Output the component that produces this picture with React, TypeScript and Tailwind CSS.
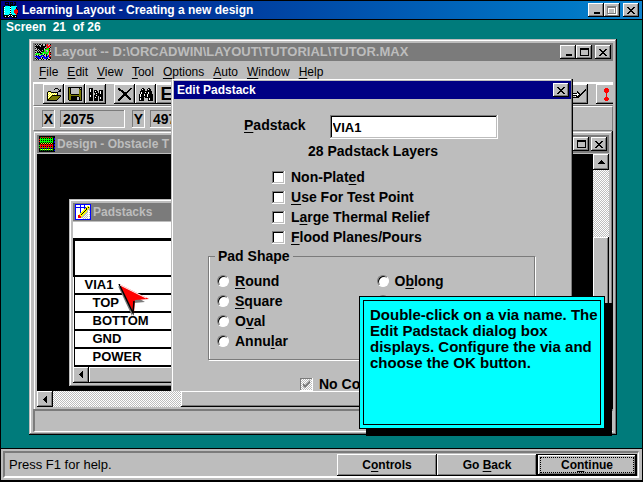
import React from "react";

const COLORS: Record<string, string> = {
  k: "#000000",
  w: "#ffffff",
  g: "#7b7b7b",
  s: "#bdbdbd",
  y: "#ffff00",
  o: "#7b7b00",
  r: "#ff0000",
  b: "#0000ff",
  n: "#000084",
  c: "#00ffff",
  G: "#00ff00",
  d: "#008400",
};

function PixelArt({ rows, className = "" }: { rows: string[]; className?: string }) {
  const width = Math.max(...rows.map((row) => row.length));
  return (
    <svg
      aria-hidden="true"
      width={width}
      height={rows.length}
      viewBox={`0 0 ${width} ${rows.length}`}
      shapeRendering="crispEdges"
      className={`shrink-0 ${className}`}
    >
      {rows.flatMap((row, y) =>
        [...row].map((ch, x) =>
          COLORS[ch] ? <rect key={`${x}-${y}`} x={x} y={y} width="1" height="1" fill={COLORS[ch]} /> : null,
        ),
      )}
    </svg>
  );
}

const ART = {
  app: [
    "..kkkk.kkk.kk...",
    "..k..k.k.k..k...",
    "..kkkk.kkk.kk...",
    ".....kkkkkkk....",
    "kkccccckcccccc..",
    "kwcccccwccccck..",
    "kcccccckccccck..",
    "kwcccccwccccrrk.",
    "kcccccckcccrrrr.",
    "kwcccccwcccrrrr.",
    "kcccccckcccrrrr.",
    "kwcccccwccccrrk.",
    "kccccckkkccccr..",
    "kkkkkkwkwkkkkk..",
    "kkwkkwkkkwkkwk..",
    ".kkkkk...kkkkk..",
  ],
  layout: [
    "kskskkskssk.r.sk",
    "sksksskksskrrsrr",
    "kkkkkskkkkk.rrr.",
    "skkkkkkkkks.rrsk",
    "kskkkkkkkskrGGks",
    "sskskkkkksGGGGr.",
    "kkskskkskG.ssGks",
    "sskskskkkG..sGrs",
    "kskkkksGGGG.GGrk",
    "sGGGskkGsGGGGsrr",
    "GGsGGGGGskskGsrk",
    "skskssbbkssksbrs",
    "bbbbkbbsbbskbbrr",
    "skbbbbskbbbbbskk",
    "kskbbksksbbbkssk",
    "skskssksksskskks",
  ],
  design: [
    "kkkkkkkkkkkkkkkk",
    "kdrdrdrdrdrdrdkk",
    "kGkGkGkGkGkGkGkb",
    "rGGGGGGGGGGGGGkb",
    "kGkGkGkGkGkGkGkk",
    "rGGGGGGGGGGGGGkb",
    "kGkGkGkGkGkGkGkb",
    "kkykykykykykykkk",
    "krkrkrkrkrkrkrkb",
    "Grrrrrrrrrrrrrkb",
    "krkrkrkrkrkrkrkk",
    "GrrGrrGrrGrrGrkb",
    "kdkbkdkbkdkbkdkb",
    "kGyGyGyGyGyGyGkk",
    "kdkdkdkdkdkdkdkb",
    "kkkkkkkkkkkkkkkk",
  ],
  pencil: [
    "bbbbbbbbbbbbbbbb",
    "bwwwwbwwwbwwwwwb",
    "bwwwwbwwwbwwyywb",
    "bbbbbbbbbbbyykyb",
    "bwwwwbwwwbykyysb",
    "bwwwwbwwwyykyssb",
    "bwwwwbwwyykyswsb",
    "bwwwwbwyykyyswwb",
    "bwwwwbyykyysswsb",
    "bwwwwyykyysswwwb",
    "bwwwyykyysswswsb",
    "bwwrryyysswswwwb",
    "bwwrrrysswswswsb",
    "bwwrrrsswswswwwb",
    "bwwwwwwwswswswsb",
    "bbbbbbbbbbbbbbbb",
  ],
  open: [
    ".........kkk....",
    "........k...k.k.",
    ".............kk.",
    "..kkk.......kkk.",
    ".kywykkkkkkk....",
    ".kwywywywywk....",
    ".kywywywywyk....",
    ".kwywykkkkkkkkk.",
    ".kywykooooooook.",
    ".kwykooooooook..",
    ".kykooooooook...",
    ".kkooooooook....",
    ".kkkkkkkkkk.....",
  ],
  save: [
    "kkkkkkkkkkkkkk",
    "kokssssssssksk",
    "kokssssssssokk",
    "kokssssssssook",
    "kokssssssssook",
    "kokssssssssook",
    "kokssssssssook",
    "kookkkkkkkkook",
    "kooooooooooook",
    "kookkkkkkkkook",
    "kookkkkkksskok",
    "kookkkkkksskok",
    "kookkkkkksskok",
    ".kkkkkkkkkkkkk",
  ],
  books: [
    "kkkk..........",
    "kwkk..........",
    "kwkk.kkk..kkkk",
    "kwkk.kwkk.kwkk",
    "kkkk.kkkk.kwkk",
    "kkkk..kwkkkwkk",
    "kkkk..kkkkkkkk",
    "kwkk.kkwkkkkkk",
    "kwkk.kkkk.kkkk",
    "kkkk.kwkk.kwkk",
    "kkkk.kkkk.kwkk",
    "kkkk.kkkk.kkkk",
    "kkkk.kkkk.kkkk",
  ],
  cross: [
    "kk..........kk",
    "kkk........kk.",
    ".kkkk.....kk..",
    "...kkk...kk...",
    "....kkkkkk....",
    ".....kkkk.....",
    ".....kkkk.....",
    "....kkkkkk....",
    "...kkk..kkk...",
    "..kkk....kkk..",
    ".kkk......kkk.",
    "kkk........kk.",
    "kk............",
  ],
  find: [
    "...kk....kk...",
    "..kwkk..kwkk..",
    "..kkkk..kkkk..",
    ".kkkkkkkkkkkk.",
    ".kwkkkwkkwkkk.",
    ".kwkkkkkkwkkk.",
    "kwkkkwkkwkkkkk",
    "kwkkkwkkwkkkkk",
    "kwkkkkkkwkkkkk",
    "kkkkk.kkkkkkkk",
    "kwkkk....kwkkk",
    "kwkkk....kwkkk",
    "kkkkk....kkkkk",
  ],
  route: [
    "................k",
    "...............kk",
    "........k.....kk.",
    "........kk...kk..",
    "....kkkkwkk.kk...",
    "....wwwwwwkkk....",
    "....kkkkwkkk.....",
    "......wkkkk......",
    "...kkkkkkk.......",
    ".................",
  ],
  alert: [
    ".rrr.",
    "rrrrr",
    "rrrrr",
    "rrrrr",
    ".rrr.",
    "..r..",
    "..r..",
    "..r..",
    "..r..",
    ".rrr.",
    "rrrrr",
    "rrrrr",
    ".rrr.",
  ],
  minimize: [".........", ".........", ".........", ".........", ".........", ".........", "..kkkkkk.", "..kkkkkk."],
  maximize: [
    "kkkkkkkkk",
    "kkkkkkkkk",
    "k.......k",
    "k.......k",
    "k.......k",
    "k.......k",
    "k.......k",
    "kkkkkkkkk",
  ],
  maximizeOff: [
    "ggggggggg.",
    "gggggggggw",
    "gwwwwwwwgw",
    "gw.....wgw",
    "gw.....wgw",
    "gw.....wgw",
    "gw.....wgw",
    "gggggggggw",
    ".wwwwwwwww",
  ],
  close: ["kk....kk", ".kk..kk.", "..kkkk..", "...kk...", "..kkkk..", ".kk..kk.", "kk....kk"],
  left: ["...k", "..kk", ".kkk", "kkkk", ".kkk", "..kk", "...k"],
  up: ["...k...", "..kkk..", ".kkkkk.", "kkkkkkk"],
};

const FRAME =
  "bg-[#bdbdbd] shadow-[inset_-1px_-1px_0_#000,inset_1px_1px_0_#bdbdbd,inset_-2px_-2px_0_#7b7b7b,inset_2px_2px_0_#fff]";
const OPEN_FRAME =
  "bg-[#bdbdbd] shadow-[inset_-1px_0_0_#000,inset_1px_1px_0_#bdbdbd,inset_-2px_0_0_#7b7b7b,inset_2px_2px_0_#fff]";
const RAISED = "bg-[#bdbdbd] shadow-[inset_-1px_-1px_0_#000,inset_1px_1px_0_#fff,inset_-2px_-2px_0_#7b7b7b]";
const SUNKEN = "shadow-[inset_-1px_-1px_0_#fff,inset_1px_1px_0_#7b7b7b]";
const DITHER = "bg-[conic-gradient(#fff_25%,#bdbdbd_0_50%,#fff_0_75%,#bdbdbd_0)] bg-[length:2px_2px]";

/** Label whose mnemonic letter follows an ampersand. */
function Mnemonic({ children }: { children: string }) {
  const at = children.indexOf("&");
  if (at < 0) return <span>{children}</span>;
  return (
    <span>
      {children.slice(0, at)}
      <span className="underline underline-offset-2">{children[at + 1]}</span>
      {children.slice(at + 2)}
    </span>
  );
}

function CaptionButton({ art, label }: { art: keyof typeof ART; label: string }) {
  return (
    <button type="button" aria-label={label} className={`flex h-[14px] w-4 items-center justify-center ${RAISED}`}>
      <PixelArt rows={ART[art]} />
    </button>
  );
}

function ToolButton({ art, label }: { art: keyof typeof ART; label: string }) {
  return (
    <button
      type="button"
      aria-label={label}
      className={`flex h-5 w-[21px] shrink-0 items-center justify-center ${RAISED}`}
    >
      <PixelArt rows={ART[art]} />
    </button>
  );
}

function ScrollButton({ art, label }: { art: keyof typeof ART; label: string }) {
  return (
    <button
      type="button"
      aria-label={label}
      className={`flex h-4 w-4 shrink-0 items-center justify-center ${RAISED}`}
    >
      <PixelArt rows={ART[art]} />
    </button>
  );
}

function CheckOption({ label }: { label: string }) {
  return (
    <label className="flex h-5 items-center gap-[6px]">
      <input
        type="checkbox"
        className="h-[13px] w-[13px] appearance-none bg-white shadow-[inset_-1px_-1px_0_#fff,inset_1px_1px_0_#7b7b7b,inset_-2px_-2px_0_#bdbdbd,inset_2px_2px_0_#000]"
      />
      <Mnemonic>{label}</Mnemonic>
    </label>
  );
}

function RadioOption({ label }: { label: string }) {
  return (
    <label className="flex h-5 items-center gap-[6px]">
      <input
        type="radio"
        name="pad-shape"
        aria-label={label ? undefined : "Shape"}
        className="h-3 w-3 appearance-none rounded-full border border-t-[#7b7b7b] border-r-white border-b-white border-l-[#7b7b7b] bg-white shadow-[inset_1px_1px_0_#000]"
      />
      <Mnemonic>{label}</Mnemonic>
    </label>
  );
}

function MenuBar() {
  const items = ["&File", "&Edit", "&View", "&Tool", "&Options", "&Auto", "&Window", "&Help"];
  return (
    <nav className="flex h-[21px] items-center gap-[9px] pl-[6px] text-xs font-normal">
      {items.map((item) => (
        <button key={item} type="button">
          <Mnemonic>{item}</Mnemonic>
        </button>
      ))}
    </nav>
  );
}

function ToolBar() {
  return (
    <div className="flex h-6 items-start justify-between border-t-2 border-b border-l border-t-white border-b-[#7b7b7b] border-l-white">
      <div className="flex gap-2 pl-[9px]">
        <div className="flex">
          <ToolButton art="open" label="Open" />
          <ToolButton art="save" label="Save" />
          <ToolButton art="books" label="Library" />
        </div>
        <div className="flex">
          <ToolButton art="cross" label="Delete" />
          <ToolButton art="find" label="Find" />
          <button type="button" className={`h-5 w-[21px] text-lg leading-5 ${RAISED}`}>
            E
          </button>
        </div>
      </div>
      <div className="flex gap-2">
        <ToolButton art="route" label="Route" />
        <div className="w-[17px] overflow-hidden">
          <ToolButton art="alert" label="Check" />
        </div>
      </div>
    </div>
  );
}

function Coordinate({ axis, value }: { axis: string; value: string }) {
  return (
    <div className="flex gap-[5px]">
      <label htmlFor={`coord-${axis}`} className={`flex h-[18px] w-[13px] items-center justify-center ${SUNKEN}`}>
        {axis}
      </label>
      <input
        id={`coord-${axis}`}
        readOnly
        defaultValue={value}
        className={`h-[18px] w-[65px] bg-[#bdbdbd] pl-[3px] ${SUNKEN}`}
      />
    </div>
  );
}

function CoordinateBar() {
  return (
    <div className="flex h-[25px] items-center gap-[7px] border border-t-white border-r-[#7b7b7b] border-b-[#7b7b7b] border-l-white pl-2 text-sm">
      <Coordinate axis="X" value="2075" />
      <Coordinate axis="Y" value="497" />
    </div>
  );
}

function Pointer() {
  return (
    <svg aria-hidden="true" width="34" height="34" viewBox="0 0 34 34" className="absolute top-[62px] left-[45px]">
      <path d="M0 2 L14 32 L16 19 L27 18 Z" fill="#7b7b7b" />
      <path d="M1 0 L31 15 L17 16 L16 29 Z" fill="#ff0000" />
      <path d="M1 0 L15 29 L16 17" fill="none" stroke="#000" strokeWidth="1.5" />
      <path d="M2 1 L28 14" fill="none" stroke="#fff" />
    </svg>
  );
}

function PadstacksWindow() {
  const rows = ["TOP", "BOTTOM", "GND", "POWER"];
  return (
    <section className={`absolute top-[45px] right-6 left-8 flex flex-col p-1 ${FRAME}`}>
      <header className="flex h-[18px] items-center gap-[2px] bg-[#7b7b7b] pl-[2px] text-xs text-[#bdbdbd]">
        <PixelArt rows={ART.pencil} />
        <h3>Padstacks</h3>
      </header>
      <div className="relative mt-px bg-white pt-4 text-[13px] leading-4">
        <table className="w-full border-collapse">
          <thead>
            <tr className="h-9 border-t-[3px] border-b-2 border-l-2 border-black">
              <th aria-label="Padstack name" />
            </tr>
          </thead>
          <tbody>
            <tr className="h-[18px] border-b-2 border-l border-black">
              <td className="p-0 pl-[10px]">VIA1</td>
            </tr>
            {rows.map((row) => (
              <tr key={row} className="h-[18px] border-b-2 border-l border-black">
                <td className="p-0 pl-[18px]">{row}</td>
              </tr>
            ))}
          </tbody>
        </table>
        <Pointer />
      </div>
      <div className="flex">
        <ScrollButton art="left" label="Scroll names left" />
        <div className={`h-4 flex-1 ${RAISED}`} />
      </div>
    </section>
  );
}

function DesignWindow() {
  return (
    <section className={`flex flex-1 flex-col px-1 pt-1 pb-[2px] ${OPEN_FRAME}`}>
      <header className="flex h-[18px] items-center gap-[2px] bg-[#7b7b7b] px-[2px] text-xs text-[#bdbdbd]">
        <PixelArt rows={ART.design} />
        <h2 className="flex-1">Design - Obstacle T</h2>
        <CaptionButton art="maximize" label="Maximize design" />
        <CaptionButton art="close" label="Close design" />
      </header>
      <div className="mt-px flex flex-1">
        <div className="relative flex-1 overflow-hidden bg-black">
          <PadstacksWindow />
        </div>
        <div className={`flex w-4 flex-col ${DITHER}`}>
          <ScrollButton art="up" label="Scroll up" />
          <div className={`mt-[67px] flex-1 ${RAISED}`} />
        </div>
      </div>
      <div className={`flex h-4 ${DITHER}`}>
        <ScrollButton art="left" label="Scroll left" />
        <div className={`ml-32 flex-1 ${RAISED}`} />
      </div>
    </section>
  );
}

function EditPadstackDialog() {
  return (
    <section
      role="dialog"
      aria-labelledby="dialog-title"
      className="absolute top-[40px] right-[44px] bottom-[44px] left-[142px] overflow-hidden border-l border-[#bdbdbd] bg-[#bdbdbd] pt-[2px] pr-[2px] pl-[2px] text-sm shadow-[inset_-1px_0_0_#000,inset_-2px_0_0_#7b7b7b,inset_1px_1px_0_#fff]"
    >
      <header className="flex h-[18px] items-center justify-between bg-[#000084] pr-[2px] pl-[3px] text-xs text-white">
        <h2 id="dialog-title">Edit Padstack</h2>
        <CaptionButton art="close" label="Close dialog" />
      </header>
      <div className="flex items-start gap-6 pt-4 pl-[70px]">
        <label htmlFor="padstack" className="leading-5">
          <Mnemonic>&Padstack</Mnemonic>
        </label>
        <input
          id="padstack"
          defaultValue="VIA1"
          className="h-6 w-[168px] bg-white pl-[3px] text-[13px] shadow-[inset_-1px_-1px_0_#fff,inset_1px_1px_0_#7b7b7b,inset_-2px_-2px_0_#bdbdbd,inset_2px_2px_0_#000]"
        />
      </div>
      <p className="mt-[2px] pl-[134px] leading-5">28 Padstack Layers</p>
      <div className="mt-[6px] pl-[98px]">
        <CheckOption label="Non-Plat&ed" />
        <CheckOption label="&Use For Test Point" />
        <CheckOption label="L&arge Thermal Relief" />
        <CheckOption label="&Flood Planes/Pours" />
      </div>
      <fieldset className="mr-[36px] ml-[34px] h-[113px] border border-[#7b7b7b] shadow-[inset_1px_0_0_#fff,1px_1px_0_#fff]">
        <legend className="ml-[6px] px-[3px] leading-[18px]">Pad Shape</legend>
        <div className="grid grid-cols-2 gap-x-[2px] pt-[6px] pl-2">
          <div>
            <RadioOption label="&Round" />
            <RadioOption label="&Square" />
            <RadioOption label="O&val" />
            <RadioOption label="Annu&lar" />
          </div>
          <div>
            <RadioOption label="O&blong" />
            <RadioOption label="" />
          </div>
        </div>
      </fieldset>
      <label className="mt-4 ml-[126px] flex h-4 items-center gap-[6px] leading-4">
        <span className="relative flex">
          <input
            type="checkbox"
            defaultChecked
            disabled
            className={`h-[13px] w-[13px] appearance-none ${DITHER} ${SUNKEN}`}
          />
          <svg aria-hidden="true" width="13" height="13" viewBox="0 0 13 13" className="absolute inset-0">
            <path d="M3 5 L5 7 L10 2 V5 L5 10 L3 8 Z" fill="#7b7b7b" />
          </svg>
        </span>
        <span>No Co</span>
      </label>
    </section>
  );
}

function Callout() {
  return (
    <aside className="absolute right-3 bottom-[6px] h-[133px] w-[246px] border border-black bg-[#00ffff] p-[3px] text-[15px] leading-4 shadow-[7px_7px_0_#000]">
      <p className="h-full border border-black pt-[6px] pl-[6px]">
        Double-click on a via name. The Edit Padstack dialog box displays. Configure the via and choose the OK button.
      </p>
    </aside>
  );
}

function LayoutWindow() {
  return (
    <section className={`relative mr-[25px] ml-7 flex flex-1 flex-col px-1 pt-1 pb-[3px] ${FRAME}`}>
      <header className="flex h-[18px] items-center gap-[3px] bg-[#7b7b7b] px-[2px] text-[13px] text-[#bdbdbd]">
        <PixelArt rows={ART.layout} />
        <h1 className="flex-1">Layout -- D:\ORCADWIN\LAYOUT\TUTORIAL\TUTOR.MAX</h1>
        <span className="flex">
          <CaptionButton art="minimize" label="Minimize layout" />
          <CaptionButton art="maximize" label="Maximize layout" />
        </span>
        <CaptionButton art="close" label="Close layout" />
      </header>
      <MenuBar />
      <ToolBar />
      <CoordinateBar />
      <DesignWindow />
      <div className="h-[23px] border-t-2 border-b border-l-2 border-t-[#7b7b7b] border-b-white border-l-[#7b7b7b]" />
      <EditPadstackDialog />
      <Callout />
    </section>
  );
}

function FooterButton({ label, active = false }: { label: string; active?: boolean }) {
  return (
    <button
      type="button"
      className={`flex h-[22px] w-[100px] items-center justify-center text-xs ${RAISED} ${active ? "border border-black" : ""}`}
    >
      <span
        className={`flex h-4 w-[94px] items-center justify-center ${active ? "border border-dotted border-black" : ""}`}
      >
        <Mnemonic>{label}</Mnemonic>
      </span>
    </button>
  );
}

export default function App() {
  return (
    <div className="flex min-h-screen flex-col border border-b-2 border-black bg-[#007b7b] font-['Liberation_Sans',Arial,sans-serif] font-bold text-black">
      <header className="flex h-[19px] items-center gap-[3px] border-b border-black bg-linear-to-r from-[#000084] to-[#1084ce] pr-[3px] pl-[2px] text-xs text-white">
        <PixelArt rows={ART.app} />
        <h1 className="flex-1">Learning Layout - Creating a new design</h1>
        <span className="flex">
          <CaptionButton art="minimize" label="Minimize" />
          <CaptionButton art="maximizeOff" label="Maximize" />
        </span>
        <CaptionButton art="close" label="Close" />
      </header>
      <main className="flex flex-1 flex-col pb-[13px]">
        <p className="h-[19px] pl-[5px] text-xs leading-[14px] text-white">Screen&nbsp; 21 &nbsp;of 26</p>
        <LayoutWindow />
      </main>
      <footer className="border-t border-black bg-[#bdbdbd] py-[2px] pr-[3px] pl-[2px]">
        <div className="flex h-[27px] items-center border-t-2 border-r border-b-2 border-l-2 border-t-[#7b7b7b] border-r-white border-b-white border-l-[#7b7b7b] pr-px">
          <p className="flex-1 pl-1 text-[13px] font-normal">Press F1 for help.</p>
          <FooterButton label="C&ontrols" />
          <FooterButton label="Go &Back" />
          <FooterButton label="Co&ntinue" active />
        </div>
      </footer>
    </div>
  );
}
